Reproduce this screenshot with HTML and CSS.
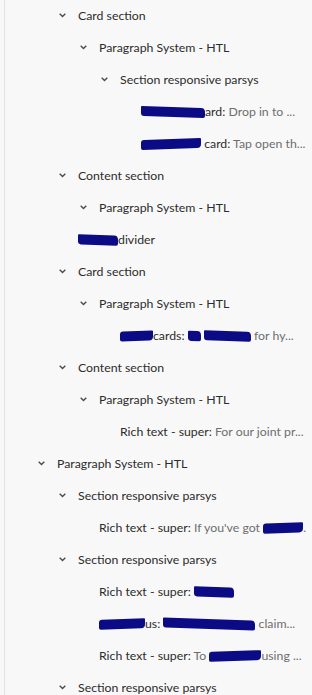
FILE: index.html
```html
<!DOCTYPE html>
<html>
<head>
<meta charset="utf-8">
<link rel="stylesheet" href="styles.css">
</head>
<body>
<div class="panel">
  <ul class="tree">
    <li class="row node l1"><span class="chev"><svg width="7" height="5" viewBox="0 0 7 5"><path d="M0.7 0.8 L3.5 3.6 L6.3 0.8" /></svg></span><span class="label">Card section</span></li>
    <li class="row node l2"><span class="chev"><svg width="7" height="5" viewBox="0 0 7 5"><path d="M0.7 0.8 L3.5 3.6 L6.3 0.8" /></svg></span><span class="label">Paragraph System - HTL</span></li>
    <li class="row node l3"><span class="chev"><svg width="7" height="5" viewBox="0 0 7 5"><path d="M0.7 0.8 L3.5 3.6 L6.3 0.8" /></svg></span><span class="label">Section responsive parsys</span></li>
    <li class="row leaf l4"><span class="label"><span class="redact w64"></span>ard:</span><span class="desc">&nbsp;Drop in to ...</span></li>
    <li class="row leaf l4"><span class="label"><span class="redact w60 r2"></span>&nbsp;card:</span><span class="desc">&nbsp;Tap open th...</span></li>
    <li class="row node l1"><span class="chev"><svg width="7" height="5" viewBox="0 0 7 5"><path d="M0.7 0.8 L3.5 3.6 L6.3 0.8" /></svg></span><span class="label">Content section</span></li>
    <li class="row node l2"><span class="chev"><svg width="7" height="5" viewBox="0 0 7 5"><path d="M0.7 0.8 L3.5 3.6 L6.3 0.8" /></svg></span><span class="label">Paragraph System - HTL</span></li>
    <li class="row leaf l1"><span class="label"><span class="redact w40"></span>divider</span></li>
    <li class="row node l1"><span class="chev"><svg width="7" height="5" viewBox="0 0 7 5"><path d="M0.7 0.8 L3.5 3.6 L6.3 0.8" /></svg></span><span class="label">Card section</span></li>
    <li class="row node l2"><span class="chev"><svg width="7" height="5" viewBox="0 0 7 5"><path d="M0.7 0.8 L3.5 3.6 L6.3 0.8" /></svg></span><span class="label">Paragraph System - HTL</span></li>
    <li class="row leaf l3"><span class="label"><span class="redact w33 r2"></span>cards:</span><span class="desc">&nbsp;<span class="redact w13"></span>&nbsp;<span class="redact w47"></span>&nbsp;for hy...</span></li>
    <li class="row node l1"><span class="chev"><svg width="7" height="5" viewBox="0 0 7 5"><path d="M0.7 0.8 L3.5 3.6 L6.3 0.8" /></svg></span><span class="label">Content section</span></li>
    <li class="row node l2"><span class="chev"><svg width="7" height="5" viewBox="0 0 7 5"><path d="M0.7 0.8 L3.5 3.6 L6.3 0.8" /></svg></span><span class="label">Paragraph System - HTL</span></li>
    <li class="row leaf l3"><span class="label">Rich text - super:</span><span class="desc">&nbsp;For our joint pr...</span></li>
    <li class="row node l0"><span class="chev"><svg width="7" height="5" viewBox="0 0 7 5"><path d="M0.7 0.8 L3.5 3.6 L6.3 0.8" /></svg></span><span class="label">Paragraph System - HTL</span></li>
    <li class="row node l1"><span class="chev"><svg width="7" height="5" viewBox="0 0 7 5"><path d="M0.7 0.8 L3.5 3.6 L6.3 0.8" /></svg></span><span class="label">Section responsive parsys</span></li>
    <li class="row leaf l2"><span class="label">Rich text - super:</span><span class="desc">&nbsp;If you've got <span class="redact w40 r2"></span>.</span></li>
    <li class="row node l1"><span class="chev"><svg width="7" height="5" viewBox="0 0 7 5"><path d="M0.7 0.8 L3.5 3.6 L6.3 0.8" /></svg></span><span class="label">Section responsive parsys</span></li>
    <li class="row leaf l2"><span class="label">Rich text - super:</span><span class="desc">&nbsp;<span class="redact w40"></span></span></li>
    <li class="row leaf l2"><span class="label"><span class="redact w46 r2"></span>us:</span><span class="desc">&nbsp;<span class="redact w92"></span>&nbsp;claim...</span></li>
    <li class="row leaf l2"><span class="label">Rich text - super:</span><span class="desc">&nbsp;To <span class="redact w52 r2"></span>using ...</span></li>
    <li class="row node l1"><span class="chev"><svg width="7" height="5" viewBox="0 0 7 5"><path d="M0.7 0.8 L3.5 3.6 L6.3 0.8" /></svg></span><span class="label">Section responsive parsys</span></li>
  </ul>
</div>
</body>
</html>
```
FILE: styles.css
```css
html, body {
  margin: 0;
  padding: 0;
  background: #f8f8f8;
}
body {
  font-family: Lato, "Noto Sans", sans-serif;
  font-size: 12.3px;
  height: 695px;
  overflow: hidden;
}
.panel {
  margin-left: 4px;
  border-left: 1px solid #e2e2e2;
  min-height: 695px;
}
.tree {
  list-style: none;
  margin: 0;
  padding: 0;
}
.row {
  box-sizing: border-box;
  height: 32px;
  padding-bottom: 2px;
  display: flex;
  align-items: center;
  white-space: nowrap;
  overflow: hidden;
}
.node.l0 { padding-left: 33px; }
.node.l1 { padding-left: 54px; }
.node.l2 { padding-left: 75px; }
.node.l3 { padding-left: 96px; }
.leaf.l1 { padding-left: 73px; }
.leaf.l2 { padding-left: 94px; }
.leaf.l3 { padding-left: 115px; }
.leaf.l4 { padding-left: 136px; }
.chev {
  width: 19px;
  flex: none;
  display: flex;
  align-items: center;
}
.chev svg {
  display: block;
  fill: none;
  stroke: #4b4b4b;
  stroke-width: 1.4;
}
.label { color: #2c2c2c; }
.desc { color: #6e6e6e; }
.redact {
  display: inline-block;
  height: 10px;
  background: #0b0b86;
  border-radius: 1px 4px 2px 3px;
  vertical-align: -1px;
  transform: skewY(2deg);
}
.redact.r2 { transform: skewY(-2deg); border-radius: 3px 1px 4px 2px; }
.w13 { width: 13px; }
.w33 { width: 33px; }
.w40 { width: 40px; }
.w46 { width: 46px; }
.w47 { width: 47px; }
.w52 { width: 52px; }
.w60 { width: 60px; }
.w64 { width: 64px; }
.w92 { width: 92px; }
```
